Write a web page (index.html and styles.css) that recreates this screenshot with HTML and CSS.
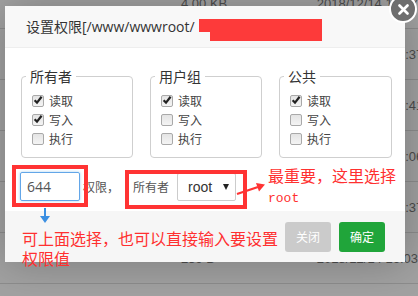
FILE: index.html
```html
<!DOCTYPE html>
<html lang="zh-CN">
<head>
<meta charset="utf-8">
<title>设置权限</title>
<link rel="stylesheet" href="styles.css">
</head>
<body>
<div class="page">
  <div class="filelist">
    <div class="row"><span class="c-size">4.00 KB</span><span class="c-time">2018/12/14 16:37</span></div>
    <div class="row"><span class="c-edge">6:37</span></div>
    <div class="row"><span class="c-edge">6:41</span></div>
    <div class="row"><span class="c-edge">6:06</span></div>
    <div class="row"><span class="c-edge">6:37</span></div>
    <div class="row"><span class="c-size">259 B</span><span class="c-time">2018/12/14 16:03</span></div>
  </div>

  <div class="dialog">
    <div class="title">设置权限[/www/wwwroot/</div>
    <span class="redact redact-a"></span>
    <span class="redact redact-b"></span>
    <span class="close">
      <svg width="11" height="11" viewBox="0 0 11 11"><path d="M1.5 1.5 L9.5 9.5 M9.5 1.5 L1.5 9.5" stroke="#fff" stroke-width="2.6" stroke-linecap="round"/></svg>
    </span>

    <div class="body">
      <div class="groups">
        <fieldset class="group">
          <legend>所有者</legend>
          <div class="opt"><span class="cb on"><svg width="10" height="10" viewBox="0 0 10 10"><path d="M1.6 5.2 L4 7.6 L8.6 1.8" fill="none" stroke="#222" stroke-width="2.2"/></svg></span>读取</div>
          <div class="opt"><span class="cb on"><svg width="10" height="10" viewBox="0 0 10 10"><path d="M1.6 5.2 L4 7.6 L8.6 1.8" fill="none" stroke="#222" stroke-width="2.2"/></svg></span>写入</div>
          <div class="opt"><span class="cb"></span>执行</div>
        </fieldset>
        <fieldset class="group">
          <legend>用户组</legend>
          <div class="opt"><span class="cb on"><svg width="10" height="10" viewBox="0 0 10 10"><path d="M1.6 5.2 L4 7.6 L8.6 1.8" fill="none" stroke="#222" stroke-width="2.2"/></svg></span>读取</div>
          <div class="opt"><span class="cb"></span>写入</div>
          <div class="opt"><span class="cb"></span>执行</div>
        </fieldset>
        <fieldset class="group">
          <legend>公共</legend>
          <div class="opt"><span class="cb on"><svg width="10" height="10" viewBox="0 0 10 10"><path d="M1.6 5.2 L4 7.6 L8.6 1.8" fill="none" stroke="#222" stroke-width="2.2"/></svg></span>读取</div>
          <div class="opt"><span class="cb"></span>写入</div>
          <div class="opt"><span class="cb"></span>执行</div>
        </fieldset>
      </div>

      <div class="access">
        <div class="mode">644</div>
        <span class="lbl lbl-perm">权限，</span>
        <span class="lbl lbl-owner">所有者</span>
        <div class="select"><span>root</span><span class="caret"></span></div>
      </div>
    </div>

    <div class="footer">
      <span class="btn btn-close">关闭</span>
      <span class="btn btn-ok">确定</span>
    </div>

    <span class="mark mark-a"></span>
    <span class="mark mark-b"></span>
    <svg class="arrow-blue" width="10" height="16" viewBox="0 0 10 16"><path d="M5 0 V9" stroke="#3b8fe2" stroke-width="2"/><path d="M0 8 H10 L5 15 Z" fill="#3b8fe2"/></svg>
    <svg class="arrow-red" width="30" height="14" viewBox="0 0 30 14"><path d="M1 12 L22 5" stroke="#f33" stroke-width="2.2"/><path d="M20 1 L29 2.5 L23 9.5 Z" fill="#f33"/></svg>
    <div class="note note-right">最重要，这里选择<br><span class="mono">root</span></div>
    <div class="note note-bottom">可上面选择，也可以直接输入要设置<br>权限值</div>
  </div>
</div>
</body>
</html>
```

FILE: styles.css
```css
* { box-sizing: border-box; }

html, body {
  margin: 0;
  padding: 0;
}

body {
  width: 418px;
  height: 296px;
  overflow: hidden;
  background: #a2a2a2;
  font-family: "Open Sans", "Noto Sans CJK SC", sans-serif;
}

.page {
  position: relative;
  width: 418px;
  height: 296px;
  overflow: hidden;
}

.filelist {
  display: flex;
  flex-direction: column;
}

.row {
  height: 51px;
  flex: none;
  display: flex;
  align-items: center;
  border-bottom: 1px solid #8d8d8d;
  font-family: "Liberation Sans", sans-serif;
  font-size: 13px;
  color: #4c4c4c;
  white-space: nowrap;
}

.row:first-child {
  margin-top: -22px;
}

.c-size {
  margin-left: 181px;
  width: 141px;
}

.c-edge {
  margin-left: 398px;
}

/* dialog */
.dialog {
  position: absolute;
  left: 5px;
  top: 6px;
  width: 400px;
  height: 256px;
  background: #fff;
  box-shadow: 1px 1px 40px rgba(0, 0, 0, 0.25);
  display: flex;
  flex-direction: column;
}

.title {
  height: 42px;
  flex: none;
  padding-left: 21px;
  line-height: 41px;
  font-size: 14px;
  color: #333;
  background: #f8f8f8;
  border-bottom: 1px solid #eee;
  white-space: nowrap;
}

.redact {
  position: absolute;
  background: #fd3a3a;
}

.redact-a {
  left: 194px;
  top: 13px;
  width: 122px;
  height: 13px;
}

.redact-b {
  left: 205px;
  top: 13px;
  width: 112px;
  height: 22px;
}

.close {
  position: absolute;
  left: 384px;
  top: -11px;
  width: 28px;
  height: 28px;
  border-radius: 50%;
  background: #6e6e6e;
  border: 2.5px solid #fff;
  display: flex;
  align-items: center;
  justify-content: center;
}

.body {
  flex: 1;
  padding: 18px 14px 0 16px;
}

.groups {
  display: grid;
  grid-template-columns: 112px 112px 113px;
  column-gap: 17px;
}

.group {
  margin: 0;
  min-width: 0;
  padding: 5px 10px 9px;
  border: 1px solid #cfcfcf;
  border-radius: 4px;
}

.group legend {
  margin-left: -6px;
  padding: 0 4px;
  font-family: "Noto Sans CJK SC", sans-serif;
  font-size: 14px;
  line-height: 20px;
  color: #333;
}

.opt {
  height: 19px;
  display: flex;
  align-items: center;
  gap: 5px;
  font-family: "Noto Sans CJK SC", sans-serif;
  font-size: 12px;
  color: #444;
}

.cb {
  width: 12px;
  height: 12px;
  flex: none;
  border: 1px solid #a9a9a9;
  border-radius: 2px;
  background: linear-gradient(#e4e4e4, #f4f4f4);
  display: flex;
  align-items: center;
  justify-content: center;
}

.cb svg {
  margin: -1px 0 0 0;
}

.access {
  margin-top: 14px;
  display: flex;
  align-items: center;
}

.mode {
  width: 60px;
  height: 29px;
  margin-left: -1px;
  padding-left: 6px;
  border: 1px solid #63a6e8;
  border-radius: 2px;
  box-shadow: 0 0 3px rgba(102, 175, 233, 0.6);
  font-size: 14px;
  line-height: 27px;
  color: #555;
}

.lbl {
  font-family: "Noto Sans CJK SC", sans-serif;
  font-size: 12px;
  color: #555;
}

.lbl-perm {
  margin-left: 3px;
}

.lbl-owner {
  margin-left: 14px;
}

.select {
  margin-left: 8px;
  width: 59px;
  height: 28px;
  border: 1px solid #ccc;
  border-radius: 2px;
  display: flex;
  align-items: center;
  justify-content: space-between;
  padding: 0 6px 0 10px;
  font-family: "Liberation Sans", sans-serif;
  font-size: 14px;
  color: #333;
}

.caret {
  width: 0;
  height: 0;
  border-left: 3px solid transparent;
  border-right: 3px solid transparent;
  border-top: 6px solid #222;
}

.footer {
  height: 51px;
  flex: none;
  background: #f6f6f6;
  display: flex;
  justify-content: flex-end;
  align-items: center;
  gap: 8px;
  padding-right: 20px;
}

.btn {
  width: 46px;
  height: 30px;
  border-radius: 3px;
  color: #fff;
  font-family: "Noto Sans CJK SC", sans-serif;
  font-size: 12px;
  display: flex;
  align-items: center;
  justify-content: center;
}

.btn-close {
  background: #cbcbcb;
}

.btn-ok {
  background: #20a53a;
}

/* annotations drawn over the dialog */
.mark {
  position: absolute;
  border: 4px solid #f33;
}

.mark-a {
  left: 7px;
  top: 159px;
  width: 76px;
  height: 42px;
}

.mark-b {
  left: 120px;
  top: 164px;
  width: 122px;
  height: 39px;
}

.arrow-blue {
  position: absolute;
  left: 35px;
  top: 202px;
}

.arrow-red {
  position: absolute;
  left: 231px;
  top: 176px;
}

.note {
  position: absolute;
  color: #ff3030;
  font-family: "Noto Sans CJK SC", sans-serif;
  font-size: 16px;
  line-height: 20px;
  white-space: nowrap;
}

.note-right {
  left: 263px;
  top: 159px;
}

.note-right .mono {
  font-family: "Liberation Mono", monospace;
  font-size: 13px;
}

.note-bottom {
  left: 17px;
  top: 222px;
}
```
